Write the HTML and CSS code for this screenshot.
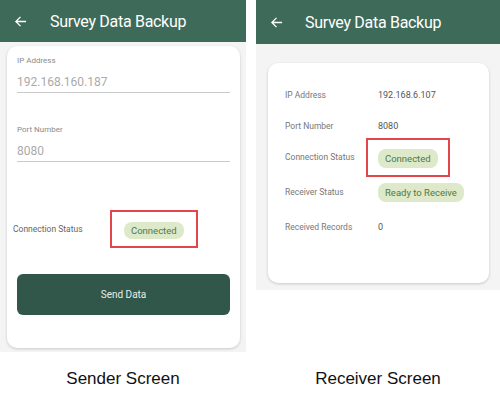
FILE: index.html
```html
<!DOCTYPE html>
<html lang="en">
<head>
    <meta charset="UTF-8">
    <title>Survey Data Backup</title>
    <link rel="stylesheet" href="styles.css">
</head>
<body>
    <div class="screens">
        <!-- Sender side -->
        <div class="column">
            <div class="phone sender">
                <header class="appbar">
                    <svg class="back" width="13" height="13" viewBox="0 0 14 14"><path d="M13 7H2M7 2L2 7l5 5" fill="none" stroke="#fff" stroke-width="1.4"/></svg>
                    <h1>Survey Data Backup</h1>
                </header>
                <div class="card sender-card">
                    <div class="field">
                        <label>IP Address</label>
                        <div class="input">192.168.160.187</div>
                    </div>
                    <div class="field">
                        <label>Port Number</label>
                        <div class="input">8080</div>
                    </div>
                    <div class="status-row">
                        <span class="label">Connection Status</span>
                        <span class="highlight"><span class="pill">Connected</span></span>
                    </div>
                    <button class="send">Send Data</button>
                </div>
            </div>
            <p class="caption">Sender Screen</p>
        </div>

        <!-- Receiver side -->
        <div class="column">
            <div class="phone receiver">
                <header class="appbar">
                    <svg class="back" width="13" height="13" viewBox="0 0 14 14"><path d="M13 7H2M7 2L2 7l5 5" fill="none" stroke="#fff" stroke-width="1.4"/></svg>
                    <h1>Survey Data Backup</h1>
                </header>
                <div class="card receiver-card">
                    <div class="row"><span class="label">IP Address</span><span class="value">192.168.6.107</span></div>
                    <div class="row"><span class="label">Port Number</span><span class="value">8080</span></div>
                    <div class="row status"><span class="label">Connection Status</span><span class="highlight"><span class="pill">Connected</span></span></div>
                    <div class="row ready"><span class="label">Receiver Status</span><span class="pill">Ready to Receive</span></div>
                    <div class="row records"><span class="label">Received Records</span><span class="value">0</span></div>
                </div>
            </div>
            <p class="caption">Receiver Screen</p>
        </div>
    </div>
</body>
</html>
```

FILE: styles.css
```css
body {
    margin: 0;
    background: #fff;
    font-family: Roboto, "Liberation Sans", sans-serif;
}
.screens {
    display: flex;
    gap: 10px;
    height: 400px;
}
.column {
    display: flex;
    flex-direction: column;
}
.column:first-child {
    width: 246px;
}
.column:last-child {
    width: 244px;
}
.phone {
    background: #f4f4f4;
}
.sender {
    height: 352px;
}
.receiver {
    height: 290px;
}
.appbar {
    background: #3e6a5a;
    display: flex;
    align-items: center;
    color: #fff;
}
.sender .appbar {
    height: 42px;
    padding-left: 14px;
}
.receiver .appbar {
    height: 44px;
    padding-left: 14px;
}
.appbar h1 {
    margin: 0 0 0 23px;
    font-size: 16px;
    font-weight: 400;
    letter-spacing: -0.3px;
}
.receiver .appbar h1 {
    margin-left: 22px;
}
.card {
    background: #fff;
    border-radius: 10px;
    box-shadow: 0 1px 3px rgba(0, 0, 0, 0.18);
}
.sender-card {
    margin: 4px 6px 0 7px;
    height: 302px;
    padding: 10px 10px 0 10px;
    box-sizing: border-box;
    display: flex;
    flex-direction: column;
}
.field {
    margin-bottom: 32px;
}
.field label {
    display: block;
    font-size: 8px;
    color: #8a8a8a;
}
.field .input {
    margin-top: 10px;
    font-size: 12px;
    color: #aaa;
    padding-bottom: 3px;
    border-bottom: 1px solid #c9c9c9;
}
.status-row {
    display: flex;
    align-items: center;
    margin: 16px 0 0 -4px;
}
.status-row .label {
    font-size: 8.5px;
    color: #666;
    width: 97px;
}
.highlight {
    border: 2px solid #e2464a;
    padding: 7px 12px;
}
.pill {
    display: inline-block;
    background: #dde9c8;
    color: #4f7a47;
    font-size: 9.5px;
    padding: 3px 7px;
    border-radius: 8px;
}
.send {
    margin-top: 26px;
    height: 41px;
    background: #30574a;
    color: #e8ece9;
    border: none;
    border-radius: 6px;
    font-family: inherit;
    font-size: 10px;
}
.receiver-card {
    margin: 19px 11px 0 12px;
    height: 220px;
    padding: 16px 0 0 17px;
    box-sizing: border-box;
}
.row {
    display: flex;
    align-items: center;
    height: 31px;
}
.row.status {
    height: 32px;
}
.row.ready {
    height: 38px;
}
.row.records {
    height: 32px;
}
.row .label {
    font-size: 8.5px;
    color: #777;
    width: 93px;
}
.row .value {
    font-size: 9px;
    color: #555;
}
.receiver-card .highlight {
    margin-left: -12px;
    padding: 7px 10px;
}
.receiver-card .pill {
    padding: 4px 7px;
}
.caption {
    margin: auto 0 11px;
    text-align: center;
    font-family: "Liberation Sans", Arial, sans-serif;
    font-size: 17px;
    color: #111;
}
```
